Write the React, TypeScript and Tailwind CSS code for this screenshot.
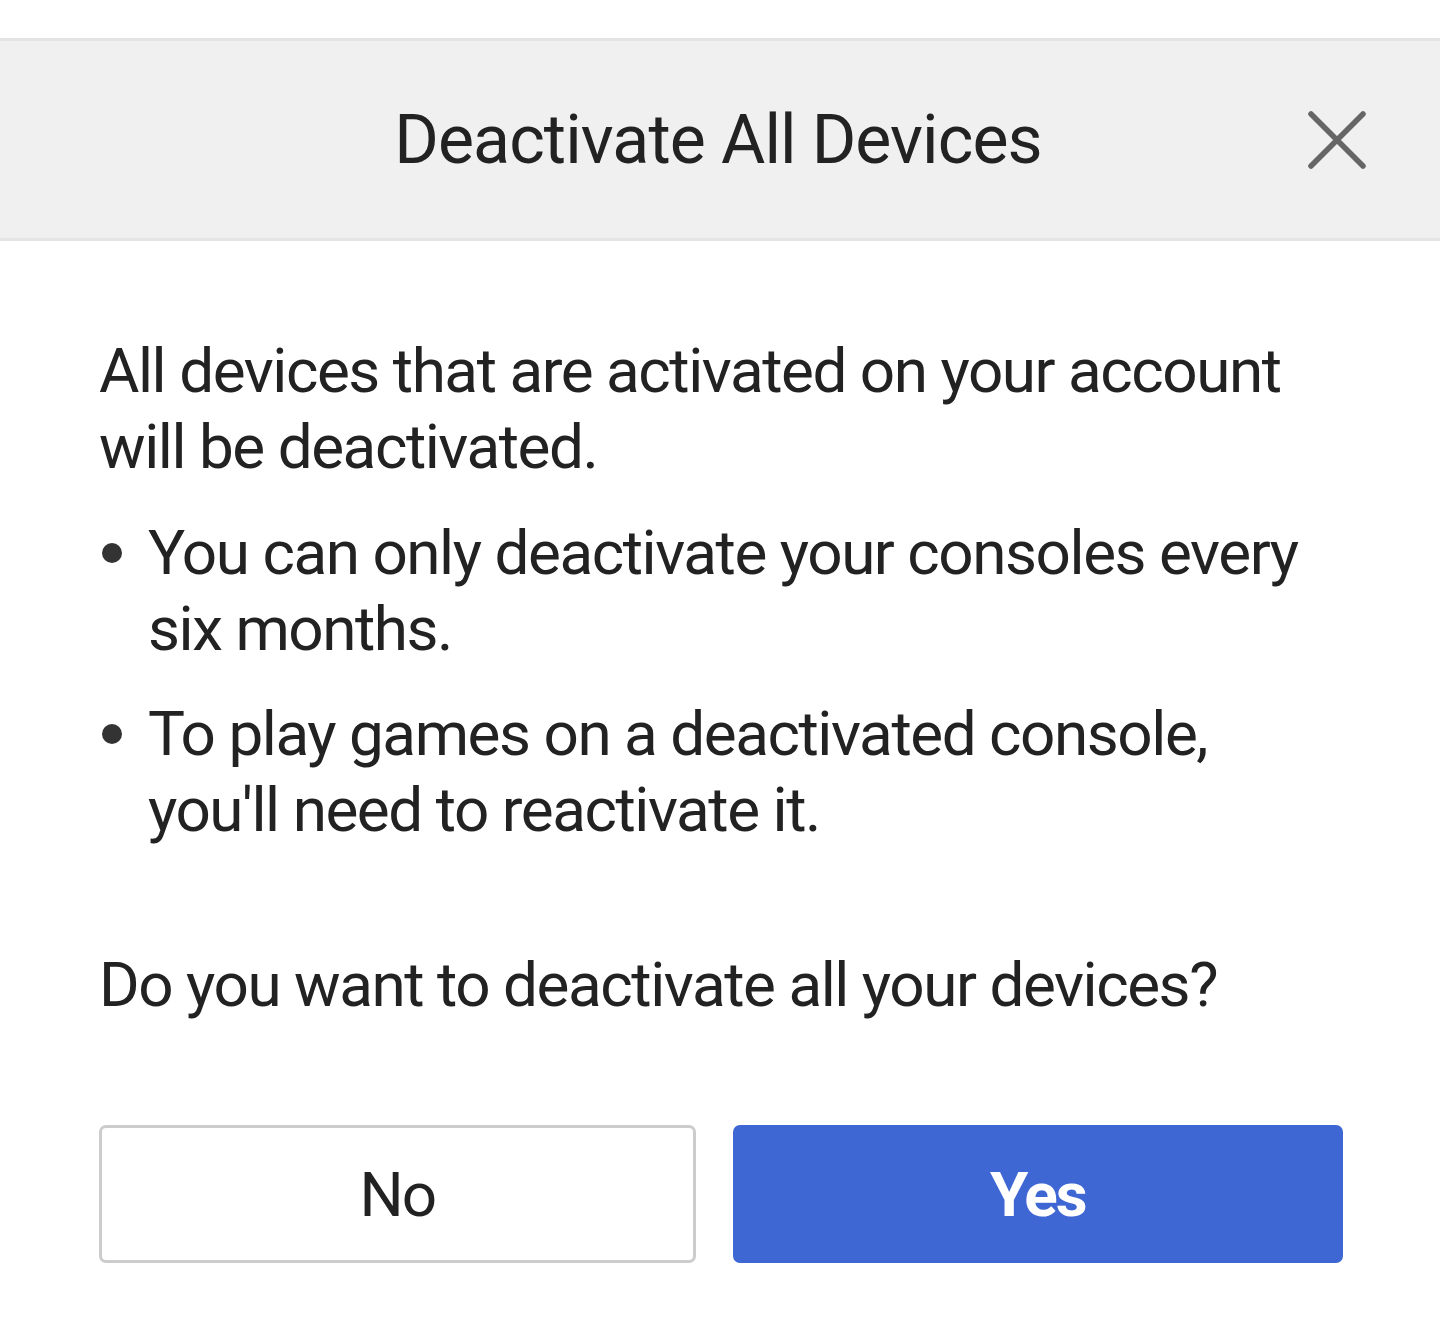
import React from "react";

export default function App() {
  const font = { fontFamily: "Roboto, 'Noto Sans', sans-serif" };
  return (
    <div className="w-[1440px] h-[1326px] bg-white text-[#222222] overflow-hidden" style={font}>
      <div className="h-[38px]" />
      <div className="relative h-[203px] border-y-[3px] border-[#e4e4e4] bg-[#f0f0f0] flex items-center justify-center">
        <h1 className="text-[68px] leading-none font-normal text-[#222222] tracking-[-0.9px] pr-[4px]">Deactivate All Devices</h1>
        <button className="absolute right-[74px] top-[70px] w-[58px] h-[58px] flex items-center justify-center">
          <svg width="58" height="58" viewBox="0 0 58 58">
            <path d="M3 3 L55 55 M55 3 L3 55" stroke="#666666" strokeWidth="5.5" strokeLinecap="round" />
          </svg>
        </button>
      </div>
      <div className="px-[99px] pt-[92px] pr-[97px] tracking-[-1.45px]">
        <p className="text-[62px] leading-[76px]">
          All devices that are activated on your account will be deactivated.
        </p>
        <ul className="mt-[30px] flex flex-col gap-[29px]">
          <li className="flex text-[62px] leading-[76px]">
            <span className="w-[49px] shrink-0 flex justify-start pt-[28px] pl-[3px]">
              <span className="block w-[20px] h-[20px] rounded-full bg-[#333333]" />
            </span>
            <span>You can only deactivate your consoles every six months.</span>
          </li>
          <li className="flex text-[62px] leading-[76px]">
            <span className="w-[49px] shrink-0 flex justify-start pt-[28px] pl-[3px]">
              <span className="block w-[20px] h-[20px] rounded-full bg-[#333333]" />
            </span>
            <span>To play games on a deactivated console, you'll need to reactivate it.</span>
          </li>
        </ul>
        <p className="mt-[99px] text-[62px] leading-[76px]">Do you want to deactivate all your devices?</p>
        <div className="mt-[102px] flex gap-[37px]">
          <button className="w-[597px] h-[138px] rounded-[7px] border-[3px] border-[#cccccc] bg-white text-[62px] text-[#222222] flex items-center justify-center tracking-[-2px]">
            No
          </button>
          <button className="w-[611px] h-[138px] rounded-[7px] bg-[#3e67d4] text-[62px] font-bold text-white flex items-center justify-center tracking-[-2px]">
            Yes
          </button>
        </div>
      </div>
    </div>
  );
}
